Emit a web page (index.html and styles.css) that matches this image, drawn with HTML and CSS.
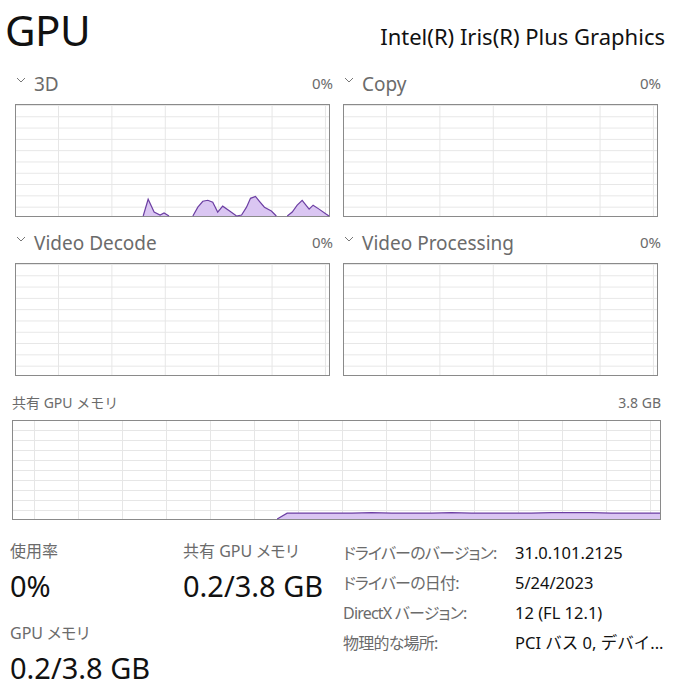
FILE: index.html
```html
<!DOCTYPE html>
<html lang="ja">
<head>
    <meta charset="UTF-8">
    <title>GPU</title>
    <link rel="stylesheet" href="styles.css">
</head>
<body>
    <div class="page">
        <!-- Заголовок -->
        <div class="head">
            <h1 class="title">GPU</h1>
            <div class="model">Intel(R) Iris(R) Plus Graphics</div>
        </div>

        <!-- Четыре графика движков -->
        <div class="engines">
            <div class="engine">
                <div class="engine-label">
                    <span class="name"><svg class="chev" viewBox="0 0 10 6"><polyline points="1,1 5,5 9,1"/></svg>3D</span>
                    <span class="pct">0%</span>
                </div>
                <div class="chart">
                    <svg class="plot" viewBox="0 0 315 113" preserveAspectRatio="none">
                        <polygon class="area" points="128,113 133,96 139,109 145,112 149,110 154,113 178,113 183,104 188,98 193,97 198,99 203,109 208,103 215,108 222,113 227,112 232,104 236,95 241,93 245,98 250,104 257,108 262,113 273,113 278,109 283,102 288,97 295,106 299,102 305,106 312,111 315,113"/>
                        <polyline class="line" points="128,113 133,96 139,109 145,112 149,110 154,113"/>
                        <polyline class="line" points="178,113 183,104 188,98 193,97 198,99 203,109 208,103 215,108 222,113"/>
                        <polyline class="line" points="222,113 227,112 232,104 236,95 241,93 245,98 250,104 257,108 262,113"/>
                        <polyline class="line" points="273,113 278,109 283,102 288,97 295,106 299,102 305,106 312,111 315,113"/>
                    </svg>
                </div>
            </div>
            <div class="engine">
                <div class="engine-label">
                    <span class="name"><svg class="chev" viewBox="0 0 10 6"><polyline points="1,1 5,5 9,1"/></svg>Copy</span>
                    <span class="pct">0%</span>
                </div>
                <div class="chart"></div>
            </div>
            <div class="engine">
                <div class="engine-label">
                    <span class="name"><svg class="chev" viewBox="0 0 10 6"><polyline points="1,1 5,5 9,1"/></svg>Video Decode</span>
                    <span class="pct">0%</span>
                </div>
                <div class="chart"></div>
            </div>
            <div class="engine">
                <div class="engine-label">
                    <span class="name"><svg class="chev" viewBox="0 0 10 6"><polyline points="1,1 5,5 9,1"/></svg>Video Processing</span>
                    <span class="pct">0%</span>
                </div>
                <div class="chart"></div>
            </div>
        </div>

        <!-- Общая память -->
        <div class="shared">
            <div class="shared-label">
                <span>共有 GPU メモリ</span>
                <span>3.8 GB</span>
            </div>
            <div class="chart chart-mem">
                <svg class="plot" viewBox="0 0 649 100" preserveAspectRatio="none">
                    <polygon class="area" points="265,100 275,94 340,94 360,93.5 380,94 420,94 440,93.5 460,94 520,94 540,93.5 580,93.5 600,94 649,94 649,100"/>
                    <polyline class="line" points="265,100 275,94 340,94 360,93.5 380,94 420,94 440,93.5 460,94 520,94 540,93.5 580,93.5 600,94 649,94"/>
                </svg>
            </div>
        </div>

        <!-- Статистика -->
        <div class="stats">
            <div class="stat-col">
                <div class="stat">
                    <div class="stat-label">使用率</div>
                    <div class="stat-value">0%</div>
                </div>
                <div class="stat">
                    <div class="stat-label">GPU メモリ</div>
                    <div class="stat-value">0.2/3.8 GB</div>
                </div>
            </div>
            <div class="stat-col stat-col-mid">
                <div class="stat">
                    <div class="stat-label">共有 GPU メモリ</div>
                    <div class="stat-value">0.2/3.8 GB</div>
                </div>
            </div>
            <div class="info">
                <span class="info-key">ドライバーのバージョン:</span>
                <span class="info-val">31.0.101.2125</span>
                <span class="info-key">ドライバーの日付:</span>
                <span class="info-val">5/24/2023</span>
                <span class="info-key">DirectX バージョン:</span>
                <span class="info-val">12 (FL 12.1)</span>
                <span class="info-key">物理的な場所:</span>
                <span class="info-val">PCI バス 0, デバイ...</span>
            </div>
        </div>
    </div>
</body>
</html>
```

FILE: styles.css
```css
:root {
    --text: #111;
    --muted: #6b6b6b;
    --border: #8a8a8a;
    --grid: #e6e6e6;
    --fill: #dac6f2;
    --stroke: #6c3fa3;
}

body {
    margin: 0;
    background: #fff;
    color: var(--text);
    font-family: "Noto Sans", "Noto Sans CJK JP", sans-serif;
}

.page {
    width: 691px;
    height: 692px;
    overflow: hidden;
}

/* Заголовок */
.head {
    display: flex;
    justify-content: space-between;
    align-items: flex-end;
    padding: 0 26px 0 5px;
    height: 58px;
}

.title {
    margin: 0;
    font-size: 42px;
    font-weight: 400;
    line-height: 56px;
    letter-spacing: -0.5px;
}

.model {
    font-size: 22px;
    line-height: 30px;
    margin-bottom: 7px;
}

/* Сетка движков */
.engines {
    display: grid;
    grid-template-columns: 318px 318px;
    column-gap: 10px;
    row-gap: 13px;
    padding: 13px 0 0 15px;
}

.engine-label {
    display: flex;
    justify-content: space-between;
    align-items: flex-start;
    height: 33px;
    color: var(--muted);
}

.name {
    font-size: 19px;
    line-height: 26px;
    margin-left: 1px;
}

.chev {
    width: 10px;
    height: 6px;
    margin-right: 8px;
    vertical-align: 8px;
}

.chev polyline {
    fill: none;
    stroke: #777;
    stroke-width: 1;
}

.pct {
    font-size: 15px;
    line-height: 26px;
    margin-top: -1px;
}

.chart {
    position: relative;
    box-sizing: border-box;
    width: 315px;
    height: 113px;
    border: 1px solid var(--border);
    background-color: #fff;
    background-image:
        linear-gradient(to right, var(--grid) 1px, transparent 1px),
        linear-gradient(to bottom, var(--grid) 1px, transparent 1px);
    background-size: 53.4px 100%, 100% 11.3px;
    background-position: 42px 0, 0 11.3px;
}

.plot {
    position: absolute;
    left: 0;
    top: 0;
    width: 100%;
    height: 100%;
    overflow: visible;
}

.area {
    fill: var(--fill);
    stroke: none;
}

.line {
    fill: none;
    stroke: var(--stroke);
    stroke-width: 1.2;
    vector-effect: non-scaling-stroke;
}

/* Общая память */
.shared {
    padding: 17px 0 0 12px;
}

.shared-label {
    display: flex;
    justify-content: space-between;
    width: 649px;
    color: var(--muted);
    font-size: 14px;
    line-height: 20px;
    height: 20px;
    margin-bottom: 7px;
}

.chart-mem {
    width: 649px;
    height: 100px;
    background-size: 44px 100%, 100% 10px;
    background-position: 21px 0, 0 9px;
}

/* Статистика */
.stats {
    display: flex;
    padding: 20px 0 0 10px;
}

.stat-col {
    width: 173px;
}

.stat-col-mid {
    width: 160px;
}

.stat {
    margin-bottom: 16px;
}

.stat-label {
    font-size: 16px;
    color: var(--muted);
    line-height: 22px;
    font-feature-settings: "palt";
}

.stat-value {
    font-size: 29px;
    line-height: 40px;
    margin-top: 4px;
}

.info {
    display: grid;
    grid-template-columns: 172px auto;
    grid-auto-rows: 30px;
    align-items: start;
    padding-top: 2px;
}

.info-key {
    color: var(--muted);
    font-size: 16px;
    line-height: 22px;
    letter-spacing: -0.8px;
    font-feature-settings: "palt";
    white-space: nowrap;
}

.info-val {
    font-size: 16.5px;
    line-height: 22px;
    white-space: nowrap;
}
```
